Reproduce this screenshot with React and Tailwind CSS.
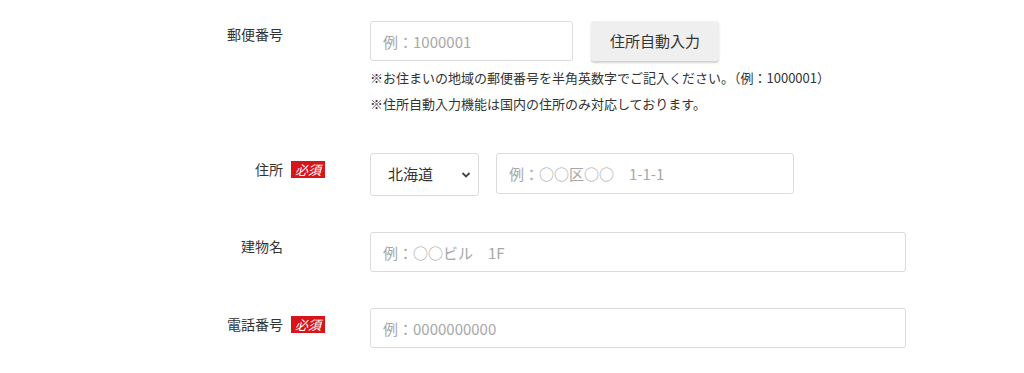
export default function App() {
  const font = { fontFamily: '"Noto Sans CJK JP", "Noto Sans", sans-serif' };
  const Badge = () => (
    <span className="ml-2 inline-flex h-[17px] w-[34px] items-center justify-center bg-[#d7141a] text-[13px] italic leading-none text-white">
      必須
    </span>
  );
  const inputCls =
    "h-[40px] rounded-[3px] border border-[#dcdcdc] bg-white px-3 text-[15px] text-[#333] placeholder:text-[#a8a8a8] outline-none";
  return (
    <div className="min-h-[373px] w-[1024px] bg-white text-[#333]" style={font}>
      <div className="flex flex-col gap-[36px] pl-[200px] pt-[21px]">
        {/* 郵便番号 */}
        <div className="flex">
          <div className="flex w-[170px] items-center self-start pt-[3px]">
            <div className="w-[83px] text-right text-[14px] leading-[20px]">郵便番号</div>
          </div>
          <div className="flex flex-col">
            <div className="flex items-start gap-[18px]">
              <input className={`${inputCls} w-[203px]`} placeholder="例：1000001" />
              <button className="h-[40px] w-[128px] rounded-[3px] bg-[#efefef] text-[15px] text-[#333] shadow-[0_2px_2px_rgba(0,0,0,0.18)]">
                住所自動入力
              </button>
            </div>
            <div className="mt-[4px] text-[13px] leading-[26px]">
              <p>※お住まいの地域の郵便番号を半角英数字でご記入ください。（例：1000001）</p>
              <p>※住所自動入力機能は国内の住所のみ対応しております。</p>
            </div>
          </div>
        </div>
        {/* 住所 */}
        <div className="flex">
          <div className="flex h-[28px] w-[170px] items-center self-start pt-[4px]">
            <div className="w-[83px] text-right text-[14px] leading-[20px]">住所</div>
            <Badge />
          </div>
          <div className="flex items-start gap-[17px]">
            <div className="relative h-[43px] w-[109px] rounded-[3px] border border-[#dcdcdc] bg-white">
              <span className="absolute left-[17px] top-[10px] text-[15px] leading-[20px] text-[#333]">北海道</span>
              <svg
                className="absolute right-[7px] top-[17px]"
                width="10"
                height="8"
                viewBox="0 0 10 8"
                fill="none"
                stroke="#444"
                strokeWidth="1.8"
              >
                <path d="M1.5 2 L5 5.5 L8.5 2" />
              </svg>
            </div>
            <input className={`${inputCls} h-[41px] w-[298px]`} placeholder="例：○○区○○　1-1-1" />
          </div>
        </div>
        {/* 建物名 */}
        <div className="flex">
          <div className="flex w-[170px] items-start pt-[4px]">
            <div className="w-[83px] text-right text-[14px] leading-[20px]">建物名</div>
          </div>
          <input className={`${inputCls} w-[536px]`} placeholder="例：○○ビル　1F" />
        </div>
        {/* 電話番号 */}
        <div className="flex">
          <div className="flex h-[28px] w-[170px] items-center self-start pt-[4px]">
            <div className="w-[83px] text-right text-[14px] leading-[20px]">電話番号</div>
            <Badge />
          </div>
          <input className={`${inputCls} w-[536px]`} placeholder="例：0000000000" />
        </div>
      </div>
    </div>
  );
}
